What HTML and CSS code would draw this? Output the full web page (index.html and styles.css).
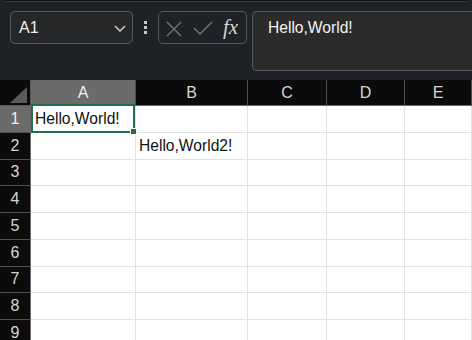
FILE: index.html
```html
<!DOCTYPE html>
<html lang="en">
<head>
    <meta charset="UTF-8">
    <meta name="viewport" content="width=device-width, initial-scale=1.0">
    <title>Sheet</title>
    <link rel="stylesheet" href="styles.css">
</head>
<body>
    <div class="ribbon-edge"></div>
    <div class="toolbar">
        <div class="namebox">
            <span>A1</span>
            <svg class="chevron" width="12" height="7" viewBox="0 0 12 7">
                <path d="M1 1 L6 6 L11 1" fill="none" stroke="#d0d0d0" stroke-width="1.5"/>
            </svg>
        </div>
        <div class="dots"><i></i><i></i><i></i></div>
        <div class="fx-buttons">
            <svg width="16" height="16" viewBox="0 0 16 16">
                <path d="M1 1 L15 15 M15 1 L1 15" stroke="#6f6f6f" stroke-width="1.5"/>
            </svg>
            <svg width="20" height="14" viewBox="0 0 20 14">
                <path d="M1 7 L7 13 L19 1" fill="none" stroke="#6f6f6f" stroke-width="1.5"/>
            </svg>
            <span class="fx">fx</span>
        </div>
        <div class="formula">Hello,World!</div>
    </div>

    <div class="sheet">
        <div class="corner"><span class="tri"></span></div>
        <div class="col-head selected">A</div>
        <div class="col-head">B</div>
        <div class="col-head">C</div>
        <div class="col-head">D</div>
        <div class="col-head">E</div>

        <div class="row-head selected">1</div>
        <div class="cell active">Hello,World!<span class="selection"><span class="handle"></span></span></div>
        <div class="cell"></div><div class="cell"></div><div class="cell"></div><div class="cell"></div>

        <div class="row-head">2</div>
        <div class="cell"></div>
        <div class="cell">Hello,World2!</div>
        <div class="cell"></div><div class="cell"></div><div class="cell"></div>

        <div class="row-head">3</div>
        <div class="cell"></div><div class="cell"></div><div class="cell"></div><div class="cell"></div><div class="cell"></div>
        <div class="row-head">4</div>
        <div class="cell"></div><div class="cell"></div><div class="cell"></div><div class="cell"></div><div class="cell"></div>
        <div class="row-head">5</div>
        <div class="cell"></div><div class="cell"></div><div class="cell"></div><div class="cell"></div><div class="cell"></div>
        <div class="row-head">6</div>
        <div class="cell"></div><div class="cell"></div><div class="cell"></div><div class="cell"></div><div class="cell"></div>
        <div class="row-head">7</div>
        <div class="cell"></div><div class="cell"></div><div class="cell"></div><div class="cell"></div><div class="cell"></div>
        <div class="row-head">8</div>
        <div class="cell"></div><div class="cell"></div><div class="cell"></div><div class="cell"></div><div class="cell"></div>
        <div class="row-head">9</div>
        <div class="cell"></div><div class="cell"></div><div class="cell"></div><div class="cell"></div><div class="cell"></div>
    </div>
</body>
</html>
```

FILE: styles.css
```css
body {
    margin: 0;
    width: 472px;
    height: 340px;
    overflow: hidden;
    background-color: #1e2227;
    font-family: "Liberation Sans", Arial, sans-serif;
}

.ribbon-edge {
    height: 1px;
    margin: 0 2px 0 2px;
    background-color: #121417;
    border-bottom: 1px solid #33383e;
    border-radius: 0 0 4px 4px;
}

.toolbar {
    height: 78px;
    box-sizing: border-box;
    padding: 9px 0 0 10px;
    display: flex;
    align-items: flex-start;
}

.namebox {
    width: 123px;
    height: 33px;
    box-sizing: border-box;
    border: 1px solid #595959;
    border-radius: 5px;
    background-color: #262729;
    display: flex;
    align-items: center;
    justify-content: space-between;
    padding: 0 6px 0 8px;
    color: #f0f0f0;
    font-size: 16px;
}

.chevron {
    margin-top: 2px;
}

.dots {
    width: 25px;
    height: 33px;
    display: flex;
    flex-direction: column;
    align-items: center;
    justify-content: center;
    gap: 2px;
}

.dots i {
    width: 3px;
    height: 3px;
    background-color: #c8c8c8;
}

.fx-buttons {
    width: 89px;
    height: 33px;
    box-sizing: border-box;
    border: 1px solid #595959;
    border-radius: 5px;
    display: flex;
    align-items: center;
    padding: 0 0 0 7px;
    gap: 11px;
}

.fx-buttons svg:first-child {
    margin-top: 3px;
}

.fx {
    font-family: "Liberation Serif", "Times New Roman", serif;
    font-style: italic;
    font-size: 21px;
    color: #d4d4d4;
    margin-left: -1px;
}

.formula {
    margin-left: 5px;
    flex: 1;
    height: 60px;
    box-sizing: border-box;
    border: 1px solid #595959;
    border-right: none;
    border-radius: 5px 0 0 5px;
    background-color: #2a2a2a;
    color: #f2f2f2;
    font-size: 15.6px;
    padding: 7px 0 0 15px;
}

.sheet {
    display: grid;
    grid-template-columns: 31px 105px 112px 79px 78px 1fr;
    grid-template-rows: 26px repeat(9, 26.75px);
    background-color: #ffffff;
}

.corner,
.col-head,
.row-head {
    background-color: #0b0b0b;
    color: #d6d6d6;
    font-size: 16px;
    box-sizing: border-box;
    display: flex;
    align-items: center;
    justify-content: center;
}

.corner {
    position: relative;
    border-right: 1px solid #5a5a5a;
    border-bottom: 1px solid #5a5a5a;
}

.tri {
    position: absolute;
    right: 3px;
    bottom: 2px;
    width: 0;
    height: 0;
    border-left: 17px solid transparent;
    border-bottom: 16px solid #5c5c5c;
}

.col-head {
    border-right: 1px solid #4f4f4f;
    border-bottom: 1px solid #6a6a6a;
    padding-top: 1px;
}

.row-head {
    border-right: 1px solid #6a6a6a;
    border-bottom: 1px solid #4f4f4f;
}

.col-head.selected,
.row-head.selected {
    background-color: #6b6b6b;
    color: #f0f0f0;
}

.cell {
    box-sizing: border-box;
    border-right: 1px solid #e1e1e1;
    border-bottom: 1px solid #e1e1e1;
    display: flex;
    align-items: center;
    padding-left: 3px;
    color: #111111;
    font-size: 15.6px;
    white-space: nowrap;
}

.cell.active {
    position: relative;
    padding-left: 4px;
}

.selection {
    position: absolute;
    top: -2px;
    left: 0;
    right: 0;
    bottom: -1px;
    border: 2px solid #1f7145;
}

.handle {
    position: absolute;
    right: -4px;
    bottom: -4px;
    width: 5px;
    height: 5px;
    background-color: #1f7145;
    border: 1px solid #ffffff;
}
```
